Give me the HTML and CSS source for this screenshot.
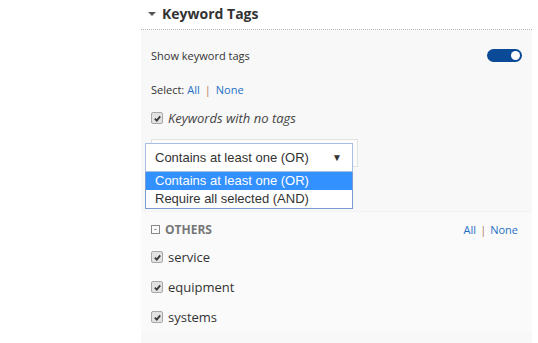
FILE: index.html
```html
<!DOCTYPE html>
<html lang="en">
<head>
    <meta charset="UTF-8">
    <title>Keyword Tags</title>
    <link rel="stylesheet" href="styles.css">
</head>
<body>
    <aside class="filter">
        <div class="filter-header">
            <span class="caret"></span>
            <h2>Keyword Tags</h2>
        </div>

        <div class="filter-body">
            <div class="row toggle-row">
                <span>Show keyword tags</span>
                <span class="toggle"><span class="knob"></span></span>
            </div>

            <div class="row select-row">
                Select: <a href="#">All</a><span class="sep">|</span><a href="#">None</a>
            </div>

            <label class="check no-tags">
                <span class="box"><svg viewBox="0 0 10 10"><path d="M2 5.2 L4.2 7.4 L8 2.6" /></svg></span>
                <em>Keywords with no tags</em>
            </label>

            <div class="mode">
                <div class="mode-ghost"></div>
                <div class="mode-select">
                    <span>Contains at least one (OR)</span>
                    <span class="arrow">&#9660;</span>
                </div>
                <ul class="mode-options">
                    <li class="active">Contains at least one (OR)</li>
                    <li>Require all selected (AND)</li>
                </ul>
            </div>

            <div class="group">
                <div class="group-header">
                    <span class="collapse">-</span>
                    <span class="group-name">OTHERS</span>
                    <span class="group-links"><a href="#">All</a><span class="sep">|</span><a href="#">None</a></span>
                </div>
                <label class="check tag">
                    <span class="box"><svg viewBox="0 0 10 10"><path d="M2 5.2 L4.2 7.4 L8 2.6" /></svg></span>
                    service
                </label>
                <label class="check tag">
                    <span class="box"><svg viewBox="0 0 10 10"><path d="M2 5.2 L4.2 7.4 L8 2.6" /></svg></span>
                    equipment
                </label>
                <label class="check tag">
                    <span class="box"><svg viewBox="0 0 10 10"><path d="M2 5.2 L4.2 7.4 L8 2.6" /></svg></span>
                    systems
                </label>
            </div>
        </div>
    </aside>
</body>
</html>
```

FILE: styles.css
```css
:root {
    --text: #333333;
    --muted: #777777;
    --link: #1f6fc5;
    --panel: #f8f8f8;
    --toggle: #0b4a96;
}

* {
    margin: 0;
    padding: 0;
    box-sizing: border-box;
}

body {
    font-family: 'Open Sans', sans-serif;
    color: var(--text);
    background: #ffffff;
}

a {
    color: var(--link);
    text-decoration: none;
}

.sep {
    color: #b07a55;
    margin: 0 5px;
}

.filter {
    margin-left: 141px;
    width: 391px;
    height: 343px;
    display: flex;
    flex-direction: column;
}

.filter-header {
    height: 30px;
    display: flex;
    align-items: center;
    padding-left: 7px;
    padding-bottom: 2px;
    border-bottom: 1px dotted #b5b5b5;
}

.caret {
    width: 0;
    height: 0;
    border-left: 4px solid transparent;
    border-right: 4px solid transparent;
    border-top: 4px solid #555;
    margin-right: 6px;
}

.filter-header h2 {
    font-size: 14px;
    font-weight: 700;
    color: #333;
}

.filter-body {
    flex: 1;
    background: var(--panel);
    padding: 14px 10px 0 10px;
}

.row {
    font-size: 11px;
    display: flex;
    align-items: center;
}

.toggle-row {
    justify-content: space-between;
    height: 22px;
}

.toggle {
    width: 35px;
    height: 13px;
    border-radius: 7px;
    background: var(--toggle);
    display: flex;
    align-items: center;
    justify-content: flex-end;
    padding-right: 2px;
}

.knob {
    width: 9px;
    height: 9px;
    border-radius: 50%;
    background: #fff;
}

.select-row {
    margin-top: 12px;
    height: 22px;
}

.select-row a:first-of-type {
    margin-left: 3px;
}

.check {
    display: flex;
    align-items: center;
    gap: 5px;
    font-size: 13px;
}

.box {
    width: 12px;
    height: 12px;
    border: 1px solid #a8a8a8;
    border-radius: 2px;
    background: #e2e2e2;
    display: flex;
    align-items: center;
    justify-content: center;
}

.box svg {
    width: 9px;
    height: 9px;
    fill: none;
    stroke: #3a3a3a;
    stroke-width: 2;
}

.no-tags {
    margin-top: 7px;
    height: 22px;
}

.no-tags em {
    color: #444;
}

.mode {
    position: relative;
    margin-top: 14px;
    margin-left: -6px;
    width: 214px;
    height: 64px;
}

.mode-ghost {
    position: absolute;
    left: 6px;
    top: -4px;
    width: 207px;
    height: 28px;
    border: 1px solid #e2e2e2;
    background: #fcfcfc;
}

.mode-select {
    position: relative;
    width: 208px;
    height: 29px;
    border: 1px solid #a7bfe4;
    background: #fff;
    display: flex;
    align-items: center;
    justify-content: space-between;
    padding: 0 10px 0 9px;
    font-family: 'Liberation Sans', Arial, sans-serif;
    font-size: 13px;
    color: #333;
}

.arrow {
    font-size: 10px;
    color: #333;
}

.mode-options {
    position: relative;
    list-style: none;
    width: 208px;
    border: 1px solid #7a9cd3;
    border-top: none;
    background: #fff;
    font-family: 'Liberation Sans', Arial, sans-serif;
    font-size: 13px;
    color: #333;
}

.mode-options li {
    height: 18px;
    line-height: 18px;
    padding-left: 9px;
}

.mode-options li.active {
    background: #3390ff;
    color: #fff;
}

.group {
    margin-top: 4px;
    margin-left: -10px;
    margin-right: -10px;
    padding: 7px 14px 0 10px;
    border-top: 1px solid #f3f3f3;
    background: #fafafa;
}

.group-header {
    display: flex;
    align-items: center;
    height: 20px;
}

.collapse {
    width: 9px;
    height: 9px;
    border: 1px solid #888;
    font-size: 9px;
    line-height: 6px;
    text-align: center;
    color: #555;
    margin-right: 5px;
}

.group-name {
    font-size: 12px;
    font-weight: 700;
    color: var(--muted);
    flex: 1;
}

.group-links {
    font-size: 11px;
}

.group-links .sep {
    margin: 0 4px;
}

.tag {
    height: 30px;
}

.group-header + .tag {
    margin-top: 3px;
}
```
